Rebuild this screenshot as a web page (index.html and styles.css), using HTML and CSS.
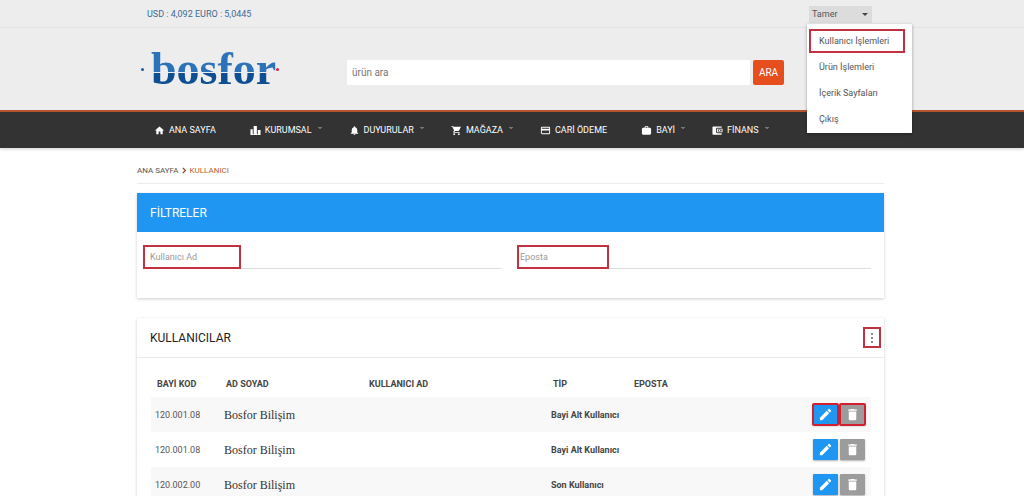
FILE: index.html
```html
<!DOCTYPE html>
<html lang="tr">
<head>
<meta charset="utf-8">
<title>Bosfor - Kullanıcı</title>
<meta name="viewport" content="width=device-width, initial-scale=1">
<link rel="stylesheet" href="styles.css">
</head>
<body>
<svg class="sprite" aria-hidden="true">
  <symbol id="home" viewBox="0 0 24 24"><path d="M10 20v-6h4v6h5v-8h3L12 3 2 12h3v8z"/></symbol>
  <symbol id="city" viewBox="0 0 24 24"><path d="M1 9h5v13H1zM8 2h7v20H8zM17 11h6v11h-6zM1 20h22v2H1z"/></symbol>
  <symbol id="bell" viewBox="0 0 24 24"><path d="M12 22c1.1 0 2-.9 2-2h-4c0 1.100.9 2 2 2zm6-6v-5c0-3.070-1.640-5.640-4.500-6.320V4c0-.83-.67-1.500-1.500-1.500s-1.500.67-1.500 1.500v.68C7.630 5.360 6 7.920 6 11v5l-2 2v1h16v-1z"/></symbol>
  <symbol id="cart" viewBox="0 0 24 24"><path d="M7 18c-1.100 0-1.990.9-1.990 2S5.900 22 7 22s2-.9 2-2-.9-2-2-2zM1 2v2h2l3.600 7.590-1.350 2.450C4.520 15.370 5.480 17 7 17h12v-2H7.420l1.130-2h7.450c.75 0 1.410-.41 1.750-1.030L21.700 4H5.210l-.94-2zm16 16c-1.100 0-1.990.9-1.990 2s.89 2 1.990 2 2-.9 2-2-.9-2-2-2z"/></symbol>
  <symbol id="card" viewBox="0 0 24 24"><path d="M20 4H4c-1.110 0-1.990.89-1.990 2L2 18c0 1.110.89 2 2 2h16c1.110 0 2-.89 2-2V6c0-1.110-.89-2-2-2zm0 14H4v-6h16zm0-10H4V6h16z"/></symbol>
  <symbol id="case" viewBox="0 0 24 24"><path fill-rule="evenodd" d="M20 6h-4V4l-2-2h-4L8 4v2H4L2 8v11l2 2h16l2-2V8zM10 6V4h4v2z"/></symbol>
  <symbol id="wallet" viewBox="0 0 24 24"><path fill-rule="evenodd" d="M21 3v3H11c-1 0-2 1-2 2v8c0 1 1 2 2 2h10v3H3c-1 0-2-1-2-2V5c0-1 1-2 2-2zM11 8h12v8H11zM13 10v4h8v-4zM15 11h3v2h-3z"/></symbol>
  <symbol id="edit" viewBox="0 0 24 24"><path d="M3 17.250V21h3.750L17.810 9.940l-3.750-3.750zM20.710 7.040c.39-.39.39-1.020 0-1.410l-2.340-2.340c-.39-.39-1.020-.39-1.410 0l-1.830 1.830 3.750 3.750z"/></symbol>
  <symbol id="trash" viewBox="0 0 24 24"><path d="M6 19c0 1.100.9 2 2 2h8c1.100 0 2-.9 2-2V7H6zM19 4h-3.500l-1-1h-5l-1 1H5v2h14z"/></symbol>
  <symbol id="down" viewBox="0 0 8 8"><path d="M1 2l3 3 3-3" fill="none" stroke="currentColor" stroke-width="2"/></symbol>
</svg>

<header class="header">
  <div class="topbar">
    <span class="rates">USD : 4,092 EURO : 5,0445</span>
    <div class="account">
      <button class="account-button" type="button" aria-expanded="true">Tamer<span class="triangle"></span></button>
      <div class="account-menu">
        <a class="marked" href="#">Kullanıcı İşlemleri</a>
        <a href="#">Ürün İşlemleri</a>
        <a href="#">İçerik Sayfaları</a>
        <a href="#">Çıkış</a>
      </div>
    </div>
  </div>
  <div class="brand-row">
    <a class="logo" href="#"><span class="dot"></span><span class="wordmark">bosfor</span><span class="dot dot-red"></span></a>
    <form class="search">
      <input type="text" placeholder="ürün ara" aria-label="ürün ara">
      <button type="button">ARA</button>
    </form>
  </div>
</header>

<nav class="nav">
  <a href="#"><svg><use href="#home"/></svg>ANA SAYFA</a>
  <a class="has-menu" href="#"><svg><use href="#city"/></svg>KURUMSAL<svg class="caret"><use href="#down"/></svg></a>
  <a class="has-menu" href="#"><svg><use href="#bell"/></svg>DUYURULAR<svg class="caret"><use href="#down"/></svg></a>
  <a class="has-menu" href="#"><svg><use href="#cart"/></svg>MAĞAZA<svg class="caret"><use href="#down"/></svg></a>
  <a href="#"><svg><use href="#card"/></svg>CARİ ÖDEME</a>
  <a class="has-menu" href="#"><svg><use href="#case"/></svg>BAYİ<svg class="caret"><use href="#down"/></svg></a>
  <a class="has-menu" href="#"><svg><use href="#wallet"/></svg>FİNANS<svg class="caret"><use href="#down"/></svg></a>
</nav>

<main class="page">
  <div class="crumbs">
    <a href="#">ANA SAYFA</a>
    <svg viewBox="0 0 8 8"><path d="M2 1l3 3-3 3" fill="none" stroke="currentColor" stroke-width="1.500"/></svg>
    <span class="current">KULLANICI</span>
  </div>

  <section class="panel">
    <h2 class="panel-title panel-title-blue">FİLTRELER</h2>
    <form class="filters">
      <div class="field field-name"><input type="text" placeholder="Kullanıcı Ad" aria-label="Kullanıcı Ad"></div>
      <div class="field field-mail"><input type="text" placeholder="Eposta" aria-label="Eposta"></div>
    </form>
  </section>

  <section class="panel">
    <div class="panel-title panel-title-plain">
      <h2>KULLANICILAR</h2>
      <button class="more" type="button" aria-label="Menü"><i></i><i></i><i></i></button>
    </div>
    <div class="table-wrap">
      <table class="users">
        <colgroup><col class="c-code"><col class="c-name"><col class="c-user"><col class="c-type"><col><col class="c-actions"></colgroup>
        <thead>
          <tr><th>BAYİ KOD</th><th>AD SOYAD</th><th>KULLANICI AD</th><th>TİP</th><th>EPOSTA</th><th></th></tr>
        </thead>
        <tbody>
          <tr>
            <td>120.001.08</td><td class="name">Bosfor Bilişim</td><td></td><td class="type">Bayi Alt Kullanıcı</td><td></td>
            <td><div class="actions"><button class="edit outlined" type="button" aria-label="Düzenle"><svg><use href="#edit"/></svg></button><button class="delete outlined" type="button" aria-label="Sil"><svg><use href="#trash"/></svg></button></div></td>
          </tr>
          <tr>
            <td>120.001.08</td><td class="name">Bosfor Bilişim</td><td></td><td class="type">Bayi Alt Kullanıcı</td><td></td>
            <td><div class="actions"><button class="edit" type="button" aria-label="Düzenle"><svg><use href="#edit"/></svg></button><button class="delete" type="button" aria-label="Sil"><svg><use href="#trash"/></svg></button></div></td>
          </tr>
          <tr>
            <td>120.002.00</td><td class="name">Bosfor Bilişim</td><td></td><td class="type">Son Kullanıcı</td><td></td>
            <td><div class="actions"><button class="edit" type="button" aria-label="Düzenle"><svg><use href="#edit"/></svg></button><button class="delete" type="button" aria-label="Sil"><svg><use href="#trash"/></svg></button></div></td>
          </tr>
        </tbody>
      </table>
    </div>
  </section>
</main>
</body>
</html>
```
FILE: styles.css
```css
*, *::before, *::after { box-sizing: border-box; }
body { margin: 0; background: #fff; color: #555; font: 9px/12px Roboto, "Liberation Sans", sans-serif; }
a { color: inherit; text-decoration: none; }
button, input { font: inherit; color: inherit; border: 0; padding: 0; margin: 0; }
button { cursor: pointer; }
svg { fill: currentColor; flex: none; }
h2 { margin: 0; font: inherit; }
.sprite { position: absolute; width: 0; height: 0; }

.header { background: #ededed; }
.topbar { display: flex; align-items: center; justify-content: space-between; height: 28px; padding: 1px 152px 0 147px; border-bottom: 1px solid #e2e2e2; }
.rates { color: #3d6a94; }
.account { position: relative; }
.account-button { display: flex; align-items: center; justify-content: space-between; width: 63px; height: 17px; padding: 0 4px 0 3px; background: #dcdcdc; }
.triangle { border: 3px solid transparent; border-top-color: #444; border-bottom: 0; }
.account-menu { position: absolute; top: 18px; left: -2px; z-index: 2; display: flex; flex-direction: column; width: 105px; padding: 5px 0 0; background: #fff; box-shadow: 0 1px 3px rgba(0, 0, 0, .35); }
.account-menu a { margin: 0 7px 2px 2px; padding: 6px 10px; }
.account-menu .marked { outline: 2px solid #c0323f; outline-offset: -2px; }

.brand-row { display: flex; align-items: center; height: 82px; padding: 0 240px 0 141px; }
.logo { display: flex; align-items: center; gap: 7px; width: 206px; }
.wordmark { font: bold 46px/60px "Liberation Serif", serif; color: transparent; background: linear-gradient(#2b72b8 0 33px, #ededed 33px 34px, #0d4f92 34px); background-clip: text; -webkit-background-clip: text; }
.dot { width: 3px; height: 3px; border-radius: 50%; background: #1d5a99; }
.dot-red { margin-left: -7px; background: #d9233a; }
.search { display: flex; flex: 1; gap: 3px; margin-top: 7px; font-size: 10px; }
.search input { flex: 1; min-width: 0; height: 25px; padding: 0 5px; background: #fff; }
.search input::placeholder { color: #777; }
.search button { width: 31px; border-radius: 2px; background: #e64f1d; color: #fff; }

.nav { display: flex; align-items: center; gap: 34px; height: 38px; padding: 0 154px; background: #333; border-top: 2px solid #b3542f; box-shadow: 0 2px 2px rgba(0, 0, 0, .12); color: #fff; }
.nav a { display: flex; align-items: center; white-space: nowrap; }
.nav a svg { width: 11px; height: 11px; margin-right: 4px; }
.nav .has-menu { margin-right: -7px; }
.nav a .caret { width: 4px; height: 4px; margin: 0 0 4px 6px; color: #bbb; }

.page { padding: 0 140px 0 137px; }
.crumbs { display: flex; align-items: center; gap: 2px; height: 36px; padding-top: 10px; border-bottom: 1px solid #ececec; font-size: 8px; }
.crumbs svg { width: 7px; height: 7px; color: #8b5130; }
.current { color: #b8622e; }

.panel { margin: 9px 0 20px; background: #fff; box-shadow: 0 1px 3px rgba(0, 0, 0, .2); }
.panel-title { font-size: 12px; }
.panel-title-blue { height: 39px; padding: 0 13px; line-height: 40px; background: #2096f3; color: #fff; }
.panel-title-plain { display: flex; align-items: center; justify-content: space-between; height: 40px; padding: 0 3px 0 13px; border-bottom: 1px solid #ebebeb; color: #222; }
.filters { display: grid; grid-template-columns: 1fr 1fr; gap: 19px; padding: 13px 13px 29px; }
.field { position: relative; }
.field input { display: block; width: 100%; height: 24px; background: none; border-bottom: 1px solid #ddd; outline: 0; }
.field input::placeholder { color: #999; }
.field::after { content: ""; position: absolute; top: 0; height: 24px; border: 2px solid #c0323f; pointer-events: none; }
.field-name::after { left: -7px; width: 98px; }
.field-mail::after { left: -3px; width: 92px; }
.more { display: flex; flex-direction: column; align-items: center; justify-content: center; gap: 2px; width: 18px; height: 21px; background: #fff; border: 2px solid #c0323f; }
.more i { width: 2px; height: 2px; background: #888; }

.table-wrap { padding: 13px 13px 20px 14px; }
.users { width: 100%; border-collapse: collapse; table-layout: fixed; }
.users th { height: 26px; padding: 0 6px; text-align: left; font-weight: bold; color: #444; }
.users td { height: 35px; padding: 0 4px; }
.users tbody tr:nth-child(odd) { background: #f9f8f8; }
.users .name { font: 12px/14px "Liberation Serif", serif; color: #333; }
.users .type { font-weight: bold; color: #444; }
.c-code { width: 69px; }
.c-name { width: 143px; }
.c-user { width: 184px; }
.c-type { width: 81px; }
.c-actions { width: 64px; }
.actions { display: flex; gap: 2px; justify-content: flex-end; padding-right: 2px; }
.actions button { display: grid; place-items: center; width: 25px; height: 21px; border-radius: 1px; box-shadow: 0 1px 2px rgba(0, 0, 0, .3); color: #fff; }
.actions svg { width: 15px; height: 15px; }
.edit { background: #2096f3; }
.delete { background: #9c9c9c; }
.outlined { outline: 2px solid #d2202f; outline-offset: -1px; }
```
